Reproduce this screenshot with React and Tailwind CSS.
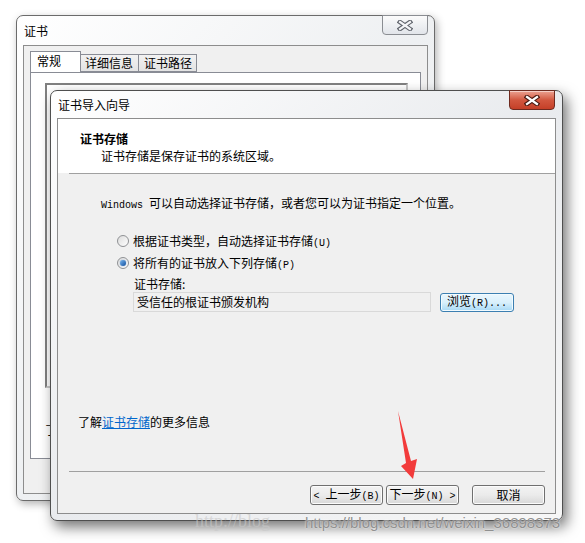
import React from 'react';

const cjk = "font-['Noto_Sans_CJK_SC','Noto_Sans',sans-serif]";
const mono = "font-['Liberation_Mono',monospace] text-[10px]";

// Aero caption close button, red when the window is active
const CloseButton = ({ active, className }) => (
  <div
    className={
      'absolute top-[-1px] w-[46px] h-[20px] rounded-b-[4px] border flex items-center justify-center ' +
      (active
        ? 'border-[#6e2a1f] bg-gradient-to-b from-[#eba191] via-[#d2573f] to-[#c53f27] shadow-[inset_0_1px_0_rgba(255,255,255,0.5)] '
        : 'border-[#8a8d92] bg-gradient-to-b from-[#fbfbfb] via-[#eef0f3] to-[#e2e5ea] ') +
      className
    }
  >
    <svg width="16" height="11" viewBox="0 0 16 11">
      <path
        d="M3 2 L13 9 M13 2 L3 9"
        stroke={active ? '#4a1a12' : '#5f636b'}
        strokeWidth="4.5"
        strokeLinecap="square"
      />
      <path
        d="M3 2 L13 9 M13 2 L3 9"
        stroke={active ? '#ffffff' : '#f4f5f8'}
        strokeWidth="2.2"
        strokeLinecap="square"
      />
    </svg>
  </div>
);

const Radio = ({ checked }) => (
  <span className="w-[12px] h-[12px] rounded-full border border-[#8f9194] bg-gradient-to-br from-[#dcdcdc] to-[#ffffff] flex items-center justify-center shrink-0">
    {checked && (
      <span className="w-[6px] h-[6px] rounded-full bg-gradient-to-br from-[#7ab8f0] to-[#0f4f9e] shadow-[0_0_1px_#2a6fc0]" />
    )}
  </span>
);

const WinButton = ({ children, className = '' }) => (
  <div
    className={
      'h-[20px] rounded-[3px] border border-[#707070] bg-gradient-to-b from-[#f3f3f3] via-[#ebebeb] to-[#d8d8d8] shadow-[inset_0_0_0_1px_#fcfcfc] flex items-center justify-center overflow-hidden whitespace-nowrap leading-[16px] ' +
      className
    }
  >
    <span>{children}</span>
  </div>
);

const App = () => {
  return (
    <div className={'relative w-[585px] h-[543px] overflow-hidden bg-white text-[12px] leading-[16px] text-black ' + cjk}>
      {/* Back window: 证书 */}
      <div className="absolute left-[16px] top-[15px] w-[419px] h-[486px] rounded-[7px] border border-[#6b6b6b] bg-gradient-to-br from-[#ffffff] via-[#eef0f2] to-[#fafafa] shadow-[2px_3px_8px_rgba(0,0,0,0.3)] flex flex-col">
        <div className="relative h-[29px] flex items-center pl-[7px]">
          <span>证书</span>
          <CloseButton className="right-[6px]" />
        </div>
        <div className="flex-1 mx-[6px] mb-[6px] border border-[#8d8d8d] bg-[#f0f0f0] px-[6px] pt-[6px] pb-[34px] flex flex-col">
          <div className="flex items-end h-[20px]">
            <div className="relative z-10 w-[51px] h-[21px] bg-white border border-b-0 border-[#898c95] pl-[6px] pt-[1px]">常规</div>
            <div className="w-[58px] h-[18px] border border-[#898c95] border-l-0 bg-gradient-to-b from-[#f2f2f2] to-[#e3e3e3] pl-[4px] leading-[16px]">详细信息</div>
            <div className="w-[58px] h-[18px] border border-[#898c95] border-l-0 bg-gradient-to-b from-[#f2f2f2] to-[#e3e3e3] pl-[5px] leading-[16px]">证书路径</div>
          </div>
          <div className="flex-1 bg-white border border-[#898c95] pl-[14px] pr-[12px] pt-[10px] flex flex-col">
            <div className="h-[305px] border-2 border-t-[#808080] border-l-[#808080] border-r-[#c8c8c8] border-b-[#c8c8c8]" />
            <div className="mt-[34px] h-[16px]">了解</div>
          </div>
        </div>
      </div>

      {/* Front dialog: 证书导入向导 */}
      <div className="absolute left-[50px] top-[90px] w-[513px] h-[431px] rounded-[7px] border border-[#4f4f4f] bg-gradient-to-br from-[#ffffff] via-[#e9ebee] to-[#f7f7f7] shadow-[4px_6px_14px_rgba(0,0,0,0.55)] flex flex-col">
        <div className="relative h-[27px] flex items-center pl-[7px] pt-[1px]">
          <span>证书导入向导</span>
          <CloseButton active className="right-[7px]" />
        </div>
        <div className="flex-1 mx-[6px] mb-[6px] border border-[#8d8d8d] bg-[#f0f0f0] flex flex-col">
          {/* header */}
          <div className="h-[54px] bg-white pt-[12px]">
            <div className="h-[16px] pl-[22px] font-bold">证书存储</div>
            <div className="h-[16px] pl-[43px] mt-[1px]">证书存储是保存证书的系统区域。</div>
          </div>
          <div className="h-px ml-[11px] bg-[#a0a0a0]" />

          {/* body */}
          <div className="h-[16px] pl-[43px] mt-[21px] whitespace-nowrap overflow-hidden">
            <span className={mono}>Windows </span>可以自动选择证书存储，或者您可以为证书指定一个位置。
          </div>
          <div className="h-[16px] pl-[59px] mt-[22px] flex items-center gap-[4px]">
            <Radio />
            <span className="h-[16px] overflow-hidden">
              根据证书类型，自动选择证书存储<span className={mono}>(U)</span>
            </span>
          </div>
          <div className="h-[16px] pl-[59px] mt-[6px] flex items-center gap-[4px]">
            <Radio checked />
            <span className="h-[16px] overflow-hidden">
              将所有的证书放入下列存储<span className={mono}>(P)</span>
            </span>
          </div>
          <div className="h-[16px] pl-[76px] mt-[5px]">证书存储:</div>
          <div className="h-[20px] pl-[75px] flex items-start gap-[9px]">
            <div className="w-[298px] h-[20px] border border-[#d9d9d9] bg-[#f0f0f0] pl-[3px] leading-[18px]">受信任的根证书颁发机构</div>
            <div className="mt-[1px] w-[74px] h-[19px] rounded-[3px] border border-[#3c7fb1] bg-gradient-to-b from-[#eaf6fd] via-[#d9f0fc] to-[#a7d9f5] shadow-[inset_0_0_0_1px_#f2fbff] flex items-center justify-center overflow-hidden">
              <span className="leading-[16px]">
                浏览<span className={mono}>(R)...</span>
              </span>
            </div>
          </div>

          <div className="h-[16px] pl-[20px] mt-[102px]">
            了解<span className="text-[#0066cc] underline">证书存储</span>的更多信息
          </div>

          <div className="h-px mt-[41px] ml-[11px] mr-[10px] bg-[#a0a0a0]" />
          <div className="h-[20px] flex justify-end pr-[10px] mt-[13px]">
            <WinButton className="w-[73px]">
              <span className={mono}>&lt; </span>上一步<span className={mono}>(B)</span>
            </WinButton>
            <WinButton className="w-[73px] ml-[3px]">
              下一步<span className={mono}>(N) &gt;</span>
            </WinButton>
            <WinButton className="w-[73px] ml-[13px]">取消</WinButton>
          </div>
        </div>
      </div>

      {/* Red annotation arrow */}
      <svg className="absolute left-0 top-0 pointer-events-none" width="585" height="543">
        <polygon points="398,411 406,463 401,466 413,479 417,459 411,461" fill="#f23b3b" />
      </svg>

      {/* Watermarks */}
      <div className="absolute left-[195px] top-[511px] font-['Liberation_Serif',serif] text-[18px] leading-[20px] text-[#c8c8c8] opacity-60 pointer-events-none">
        http://blog
      </div>
      <div className="absolute left-[305px] top-[514px] font-['Liberation_Sans',sans-serif] text-[15px] leading-[17px] text-[#909090] [text-shadow:0_0_2px_#ffffff] pointer-events-none">
        https://blog.csdn.net/weixin_36898373
      </div>
    </div>
  );
};

export default App;
